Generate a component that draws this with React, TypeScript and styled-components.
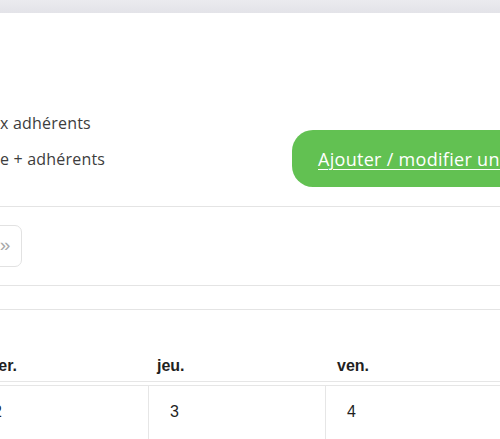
import React from "react";
import styled, { createGlobalStyle } from "styled-components";

const Global = createGlobalStyle`
  html, body { margin: 0; padding: 0; background: #ffffff; overflow: hidden; }
  body { font-family: "Open Sans", "Noto Sans", sans-serif; color: #444; }
  * { box-sizing: border-box; }
`;

const Page = styled.div`
  width: 500px;
  display: flex;
  flex-direction: column;
`;

const TopBar = styled.div`
  height: 13px;
  background: linear-gradient(#ebebef, #e3e3e8);
`;

const HeaderSection = styled.section`
  display: flex;
  align-items: flex-end;
  padding: 98px 0 19px 0;
  border-bottom: 1px solid #e4e4e4;
`;

const Legend = styled.ul`
  flex: 0 0 292px;
  list-style: none;
  margin: 0 0 16px 0;
  padding: 0;
  display: flex;
  flex-direction: column;
  gap: 12px;
`;

const LegendItem = styled.li`
  height: 24px;
  line-height: 24px;
  font-size: 16px;
  letter-spacing: 0.2px;
  color: #3d3d3d;
  white-space: nowrap;
`;

const AddButton = styled.a`
  flex: none;
  height: 57px;
  display: flex;
  align-items: center;
  padding: 0 26px;
  border-radius: 21px;
  background: #62c152;
  color: #ffffff;
  font-size: 18px;
  letter-spacing: 0.3px;
  text-decoration: underline;
  text-underline-offset: 3px;
  text-decoration-thickness: 1px;
  white-space: nowrap;
`;

const Toolbar = styled.div`
  display: flex;
  padding: 18px 0;
  border-bottom: 1px solid #e4e4e4;
`;

const PagerGroup = styled.div`
  display: flex;
  gap: 6px;
  margin-left: -132px;
`;

const PagerButton = styled.button`
  height: 42px;
  width: 34px;
  padding: 0 0 3px 0;
  display: flex;
  align-items: center;
  justify-content: center;
  background: #fff;
  border: 1px solid #e2e2e2;
  border-radius: 7px;
  color: #a8a8a8;
  font-family: "Liberation Sans", Arial, sans-serif;
  font-size: 19px;
  line-height: 1;
`;

const Spacer = styled.div`
  height: 24px;
  border-bottom: 1px solid #e4e4e4;
`;

const DayHeaderRow = styled.div`
  display: grid;
  grid-template-columns: 180px 180px 173px repeat(4, 180px);
  margin-left: -386px;
  width: max-content;
  border-bottom: 1px solid #e6e6e6;
`;

const DayHeader = styled.div`
  height: 71px;
  display: flex;
  align-items: flex-end;
  padding: 0 10px 5px 10px;
  font-family: "Liberation Sans", Arial, sans-serif;
  font-weight: 700;
  font-size: 16px;
  line-height: 20px;
  color: #1f1f1f;
`;

const WeekRow = styled.div`
  display: grid;
  grid-template-columns: repeat(7, 177px);
  margin-top: 3px;
  margin-left: -383px;
  width: max-content;
  border-top: 1px solid #e6e6e6;
`;

const DayCell = styled.div`
  height: 80px;
  border-left: 1px solid #e6e6e6;
  padding: 16px 21px 0 21px;
  font-family: "Liberation Sans", Arial, sans-serif;
  font-size: 16px;
  line-height: 20px;
  color: #1f1f1f;
`;

const days = ["lun.", "mar.", "mer.", "jeu.", "ven.", "sam.", "dim."];
const dates = ["31", "1", "2", "3", "4", "5", "6"];

export default function App() {
  return (
    <Page>
      <Global />
      <TopBar />
      <HeaderSection>
        <Legend>
          <LegendItem>x adhérents</LegendItem>
          <LegendItem>e + adhérents</LegendItem>
        </Legend>
        <AddButton href="#">Ajouter / modifier un créneau</AddButton>
      </HeaderSection>
      <Toolbar>
        <PagerGroup>
          <PagerButton>«</PagerButton>
          <PagerButton>‹</PagerButton>
          <PagerButton>›</PagerButton>
          <PagerButton>»</PagerButton>
        </PagerGroup>
      </Toolbar>
      <Spacer />
      <DayHeaderRow>
        {days.map((d) => (
          <DayHeader key={d}>{d}</DayHeader>
        ))}
      </DayHeaderRow>
      <WeekRow>
        {dates.map((d) => (
          <DayCell key={d}>{d}</DayCell>
        ))}
      </WeekRow>
    </Page>
  );
}
